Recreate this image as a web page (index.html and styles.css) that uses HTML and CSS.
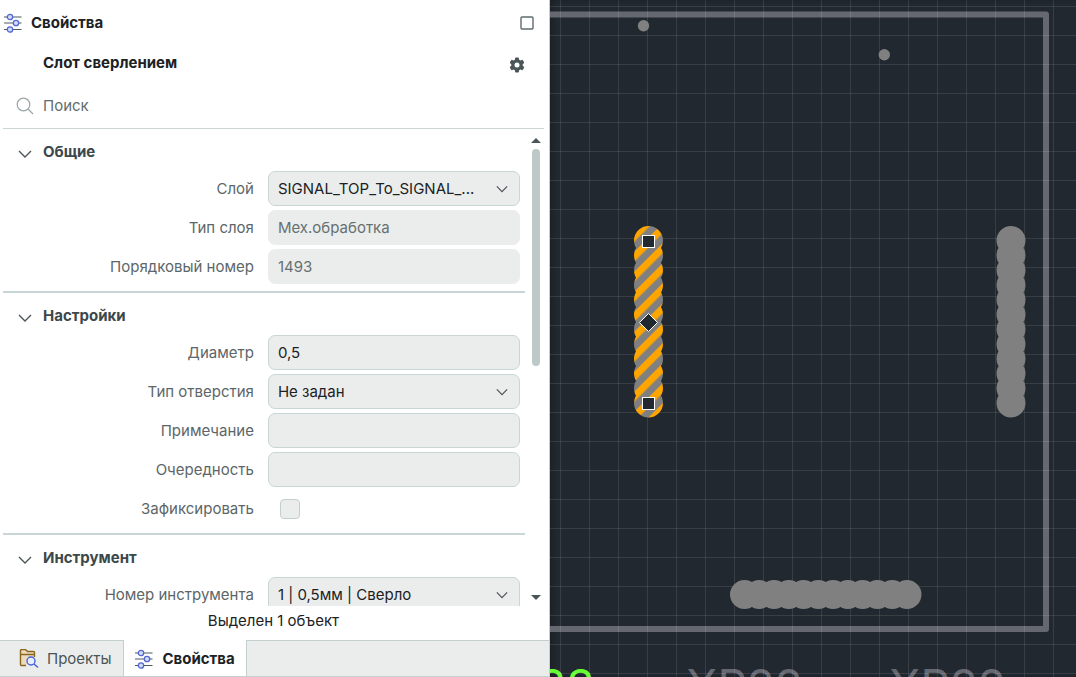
FILE: index.html
```
<!DOCTYPE html>
<html lang="ru">
<head>
    <meta charset="UTF-8">
    <meta name="viewport" content="width=device-width, initial-scale=1">
    <title>Свойства</title>
    <link rel="stylesheet" href="styles.css">
</head>
<body>

    <!-- Shared icons -->
    <svg class="sprite" aria-hidden="true">
        <symbol id="icon-sliders" viewBox="0 0 20 20">
            <g fill="none" stroke="#4d5a5c" stroke-width="1.2">
                <path d="M1 4h17.500M1 10h17.500M1 16.500h17.500"/>
            </g>
            <g fill="#d3dcfb" stroke="#5068d0" stroke-width="1.300">
                <circle cx="7" cy="4" r="2.700"/>
                <circle cx="13" cy="10" r="2.700"/>
                <circle cx="7" cy="16.500" r="2.700"/>
            </g>
        </symbol>
        <symbol id="icon-chevron" viewBox="0 0 14 14">
            <path d="M1 4l6 6 6-6" fill="none" stroke="#4a5658" stroke-width="1.400"/>
        </symbol>
    </svg>

    <div class="app">
        <!-- Properties panel -->
        <aside class="panel">
            <header class="panel-header">
                <svg class="icon"><use href="#icon-sliders"/></svg>
                <h1>Свойства</h1>
                <button class="icon-button" type="button" aria-label="Развернуть">
                    <svg width="14" height="14" viewBox="0 0 14 14"><rect x="1" y="1" width="12" height="12" rx="1" fill="none" stroke="#5f6b6d" stroke-width="1.400"/></svg>
                </button>
            </header>

            <div class="object-row">
                <h2>Слот сверлением</h2>
                <button class="icon-button" type="button" aria-label="Настройки">
                    <svg width="16" height="16" viewBox="0 0 16 16">
                        <g fill="#4a5658">
                            <rect x="6" y="0.500" width="4" height="15" rx="1"/>
                            <rect x="6" y="0.500" width="4" height="15" rx="1" transform="rotate(60 8 8)"/>
                            <rect x="6" y="0.500" width="4" height="15" rx="1" transform="rotate(120 8 8)"/>
                            <circle cx="8" cy="8" r="5.800"/>
                        </g>
                        <circle cx="8" cy="8" r="2.500" fill="#fff"/>
                    </svg>
                </button>
            </div>

            <div class="search">
                <svg width="18" height="18" viewBox="0 0 18 18" fill="none" stroke="#9aa5a5" stroke-width="1.200"><circle cx="7.500" cy="7.500" r="6.300"/><path d="M12 12l5 5"/></svg>
                <input type="search" placeholder="Поиск" aria-label="Поиск">
            </div>

            <div class="scroll-area">
                <form class="properties">
                    <!-- General -->
                    <section class="group">
                        <h3><svg><use href="#icon-chevron"/></svg>Общие</h3>
                        <div class="field">
                            <label for="layer">Слой</label>
                            <div class="select">
                                <select id="layer"><option>SIGNAL_TOP_To_SIGNAL_...</option></select>
                                <svg><use href="#icon-chevron"/></svg>
                            </div>
                        </div>
                        <div class="field">
                            <label for="layer-type">Тип слоя</label>
                            <input type="text" id="layer-type" value="Мех.обработка" disabled>
                        </div>
                        <div class="field">
                            <label for="number">Порядковый номер</label>
                            <input type="text" id="number" value="1493" disabled>
                        </div>
                    </section>

                    <!-- Settings -->
                    <section class="group">
                        <h3><svg><use href="#icon-chevron"/></svg>Настройки</h3>
                        <div class="field">
                            <label for="diameter">Диаметр</label>
                            <input type="text" id="diameter" value="0,5">
                        </div>
                        <div class="field">
                            <label for="hole-type">Тип отверстия</label>
                            <div class="select">
                                <select id="hole-type"><option>Не задан</option></select>
                                <svg><use href="#icon-chevron"/></svg>
                            </div>
                        </div>
                        <div class="field">
                            <label for="note">Примечание</label>
                            <input type="text" id="note">
                        </div>
                        <div class="field">
                            <label for="order">Очередность</label>
                            <input type="text" id="order">
                        </div>
                        <div class="field">
                            <label for="fixed">Зафиксировать</label>
                            <input type="checkbox" id="fixed">
                        </div>
                    </section>

                    <!-- Tool -->
                    <section class="group">
                        <h3><svg><use href="#icon-chevron"/></svg>Инструмент</h3>
                        <div class="field">
                            <label for="tool">Номер инструмента</label>
                            <div class="select">
                                <select id="tool"><option>1 | 0,5мм | Сверло</option></select>
                                <svg><use href="#icon-chevron"/></svg>
                            </div>
                        </div>
                    </section>
                </form>
                <div class="scrollbar" aria-hidden="true">
                    <svg width="10" height="5"><path d="M0 5l5-5 5 5z" fill="#4a5658"/></svg>
                    <div class="track"><div class="thumb"></div></div>
                    <svg width="10" height="5"><path d="M0 0l5 5 5-5z" fill="#4a5658"/></svg>
                </div>
            </div>

            <p class="status">Выделен 1 объект</p>

            <!-- Panel tabs -->
            <nav class="tabs">
                <button class="tab" type="button">
                    <svg class="icon" viewBox="0 0 20 20" fill="none">
                        <path d="M6.500 16.500H2.500a1 1 0 0 1-1-1V1.500a1 1 0 0 1 1-1h4l2 2h6a1 1 0 0 1 1 1V8" fill="#ebdcc0"/>
                        <path d="M7 16.500H2.500a1 1 0 0 1-1-1V1.500a1 1 0 0 1 1-1h4l2 2h6a1 1 0 0 1 1 1V8M1.500 5.500h14" stroke="#8a651c" stroke-width="1.400"/>
                        <circle cx="12" cy="12" r="4" fill="#e9eefc" stroke="#4565d8" stroke-width="1.400"/>
                        <path d="M15 15l4 3.500" stroke="#4565d8" stroke-width="1.500"/>
                    </svg>
                    Проекты
                </button>
                <button class="tab active" type="button">
                    <svg class="icon"><use href="#icon-sliders"/></svg>
                    Свойства
                </button>
            </nav>
        </aside>

        <!-- Board editor -->
        <main class="board">
            <svg class="canvas" role="img" aria-label="Плата">
                <defs>
                    <pattern id="grid" width="29" height="29" x="10" y="6" patternUnits="userSpaceOnUse">
                        <path d="M0 .5h29M.5 0v29" stroke="#fff" stroke-opacity=".1"/>
                    </pattern>
                    <pattern id="selected" width="14.14" height="14.14" patternUnits="userSpaceOnUse" patternTransform="translate(-4 0) rotate(45)">
                        <rect width="14.14" height="14.14" fill="#808080"/>
                        <rect width="7.07" height="14.14" fill="#ffa500"/>
                    </pattern>
                </defs>

                <!-- Board outline -->
                <rect x="-40" y="14.500" width="536" height="614.500" fill="none" stroke="#666871" stroke-width="6" stroke-linejoin="round"/>

                <!-- Designators -->
                <text class="designator highlighted" x="-12" y="703">33</text>
                <text class="designator" x="136" y="703">XP22</text>
                <text class="designator" x="339" y="703">XP22</text>

                <rect width="100%" height="100%" fill="url(#grid)"/>

                <!-- Holes -->
                <circle cx="93.500" cy="25.800" r="5.700" fill="#808080"/>
                <circle cx="334.300" cy="54.700" r="5.700" fill="#808080"/>

                <!-- Slots, drilled as overlapping circles -->
                <path class="slot" d="M461 240.600V403.300"/>
                <path class="slot" d="M194.500 594.500H357"/>
                <path class="slot selected" d="M98.500 240.600V403.300"/>

                <!-- Selection handles -->
                <g fill="#222830" stroke="#fff">
                    <rect x="92.500" y="235.500" width="12" height="12"/>
                    <rect x="92.500" y="397.500" width="12" height="12"/>
                    <path d="M98.500 313.500l9 9-9 9-9-9z"/>
                </g>
            </svg>
        </main>
    </div>

</body>
</html>
```
FILE: styles.css
```
* {
    box-sizing: border-box;
}

body {
    margin: 0;
    font-family: Inter, "Noto Sans", sans-serif;
    font-size: 15px;
    line-height: 20px;
    color: #1c2224;
    background-color: #222830;
}

h1, h2, h3, p {
    margin: 0;
    font-size: 15px;
}

h1, h2, h3 {
    font-weight: 650;
}

button, input, select {
    font: inherit;
    color: inherit;
}

button {
    border: none;
    background: none;
    cursor: pointer;
}

.sprite {
    display: none;
}

.app {
    display: flex;
    height: 100vh;
}

/* Properties panel */
.panel {
    flex: 0 0 51.1%;
    min-width: 0;
    display: flex;
    flex-direction: column;
    background-color: #fff;
    border-right: 1px solid #c3d0cf;
}

.icon {
    width: 20px;
    height: 20px;
    flex: none;
}

.icon-button {
    display: flex;
    margin-left: auto;
    padding: 0;
}

.panel-header {
    display: flex;
    align-items: center;
    gap: 8px;
    height: 45px;
    padding: 0 15px 0 3px;
}

.object-row {
    display: flex;
    align-items: center;
    height: 36px;
    padding: 0 24px 0 43px;
}

.object-row .icon-button {
    padding-top: 4px;
}

.search {
    display: flex;
    align-items: center;
    gap: 9px;
    height: 48px;
    margin: 0 5px 0 3px;
    padding: 2px 0 0 13px;
    border-bottom: 1px solid #c8d6d5;
}

.search input {
    flex: 1;
    min-width: 0;
    padding: 0;
    border: none;
    outline: none;
    background: none;
}

.search input::placeholder {
    color: #636d6e;
    opacity: 1;
}

.scroll-area {
    flex: 1;
    min-height: 0;
    display: flex;
    overflow: hidden;
}

.properties {
    flex: 1;
    min-width: 0;
    padding-left: 3px;
}

.group {
    padding-bottom: 7px;
    border-bottom: 2px solid #c8d6d5;
}

.group h3 {
    display: flex;
    align-items: center;
    gap: 11px;
    height: 42px;
    padding: 4px 0 0 15px;
    color: #3c484a;
}

.group h3 svg {
    width: 14px;
    height: 14px;
    margin-top: 4px;
}

.field {
    display: grid;
    grid-template-columns: 1fr 1fr;
    gap: 13px;
    align-items: center;
    height: 35px;
    padding-right: 5px;
}

.field + .field {
    margin-top: 4px;
}

.field label {
    padding-right: 1px;
    text-align: right;
    color: #5c6668;
}

.field input[type="text"],
.field select {
    width: 100%;
    height: 35px;
    padding: 0 9px;
    border: 1px solid #c8d6d5;
    border-radius: 7px;
    outline: none;
    background-color: #ebedec;
}

.field input[type="text"]:disabled {
    border-color: #ebedec;
    color: #667071;
}

.select {
    display: grid;
    align-items: center;
}

.select select,
.select svg {
    grid-area: 1 / 1;
}

.select select {
    appearance: none;
    padding-right: 36px;
    text-overflow: ellipsis;
}

.select svg {
    justify-self: end;
    width: 12px;
    height: 12px;
    margin-right: 12px;
    pointer-events: none;
}

.field input[type="checkbox"] {
    appearance: none;
    width: 20px;
    height: 20px;
    margin: 0 0 0 12px;
    border: 1px solid #c3cfce;
    border-radius: 4px;
    background-color: #ebedec;
}

.field input[type="checkbox"]:checked {
    background-color: #5068d0;
}

/* Scrollbar */
.scrollbar {
    display: flex;
    flex-direction: column;
    align-items: center;
    gap: 6px;
    width: 24px;
    padding: 9px 2px 6px 0;
}

.track {
    flex: 1;
    width: 8px;
}

.thumb {
    height: 49.4%;
    border-radius: 4px;
    background-color: #bdc9c8;
}

.status {
    padding: 5px 2px 9px 0;
    text-align: center;
}

/* Tabs */
.tabs {
    display: flex;
    height: 37px;
    border-top: 1px solid #c3d0cf;
    border-bottom: 1px solid #c3d0cf;
    background-color: #ebedec;
}

.tab {
    display: flex;
    align-items: center;
    gap: 8px;
    padding: 0 12px 0 19px;
    border-right: 1px solid #c3d0cf;
    color: #4a5456;
}

.tab.active {
    margin-top: -1px;
    padding: 1px 11px 0 10px;
    background-color: #fff;
    color: #1c2224;
    font-weight: 650;
}

/* Board editor */
.board {
    flex: 1;
    min-width: 0;
    overflow: hidden;
    box-shadow: inset 3px 0 4px rgba(0, 0, 0, 0.2);
}

.canvas {
    display: block;
    width: 100%;
    height: 100%;
}

.slot {
    fill: none;
    stroke: #808080;
    stroke-width: 29;
    stroke-linecap: round;
    stroke-dasharray: 0 14.77;
}

.slot.selected {
    stroke: url(#selected);
}

.designator {
    font-size: 46px;
    fill: #666871;
}

.designator.highlighted {
    fill: #66ff33;
}
```
